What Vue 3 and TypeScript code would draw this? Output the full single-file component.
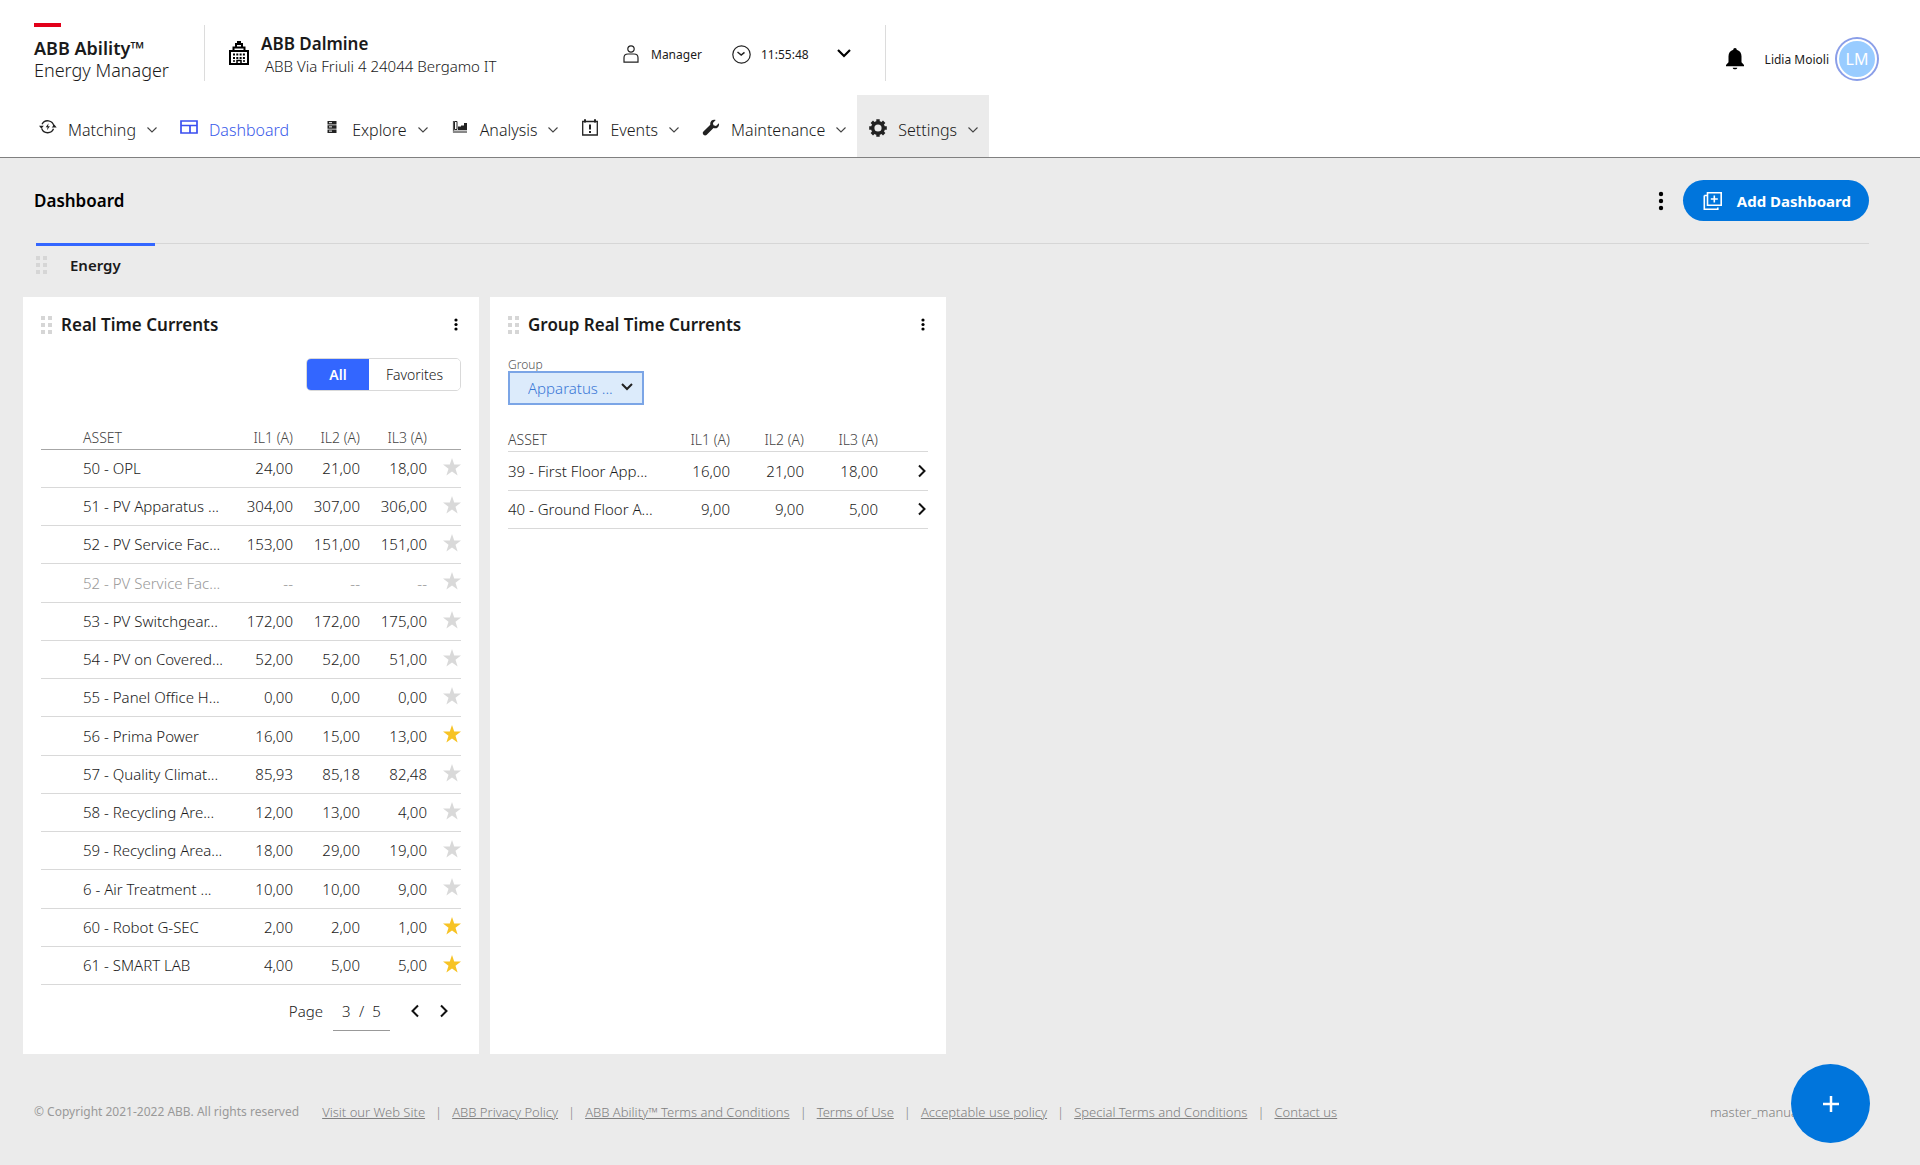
<script setup lang="ts">
import { ref } from 'vue'

interface NavItem { label: string; icon: string; menu: boolean; active?: boolean; open?: boolean }
interface Reading { asset: string; values: [string, string, string]; favorite?: boolean; offline?: boolean }

const nav: NavItem[] = [
  { label: 'Matching', menu: true, icon: '<g fill="none" stroke="#222" stroke-width="1.3"><path d="M3 5.200A6.300 6.300 0 0 1 14.800 7M14.500 9.800A6.300 6.300 0 0 1 2.700 9.500"/></g><path d="M0 6.800h4.800L2.400 9.800zM12.700 8.600h5L15.300 5.600zM9.600 4.300 6.700 8.300h1.900l-.6 3 2.900-4h-1.900z" fill="#222"/>' },
  { label: 'Dashboard', menu: false, active: true, icon: '<path d="M1 2h16v12H1zM1 6.500h16M10 6.500V14" fill="none" stroke="#3b4ff0" stroke-width="1.700"/>' },
  { label: 'Explore', menu: true, icon: '<path d="M4.500 2h9v3.500h-9zm0 4.200h9v3.500h-9zm0 4.200h9v3.500h-9z" fill="#222"/><path d="M6 3.700h3M6 7.900h3M6 12.100h3" stroke="#fff"/>' },
  { label: 'Analysis', menu: true, icon: '<path d="M2.500 2v11h13.500" fill="none" stroke="#555" stroke-width="1.200"/><path d="M3.500 2.500H6v8H3.500z" fill="none" stroke="#222"/><path d="M7 7.500h3V11H7zm3-1h3V11h-3zm3-2.500h3V11h-3z" fill="#222"/><path d="M2 11.500h14V14H2z" fill="#888"/>' },
  { label: 'Events', menu: true, icon: '<path d="M1.700 2.500h14.600v13.500H1.700z" fill="none" stroke="#222" stroke-width="1.300"/><path d="M4 .2v3.300M14 .2v3.300M9 5.500v5M9 12v2" stroke="#222" stroke-width="2" fill="none"/>' },
  { label: 'Maintenance', menu: true, icon: '<path d="M16.900 4.200 14 6.900l-2.500-.7-.6-2.300L13.700 1C10.500 0 7.700 2.300 8.300 5.700L1.200 12.800c-1.500 2 1.300 4.800 3.300 3.200L11.500 9.100c3.500.9 6.200-1.500 5.400-4.900z" fill="#222"/>' },
  { label: 'Settings', menu: true, open: true, icon: '<circle cx="9" cy="9" r="5.300" fill="none" stroke="#222" stroke-width="3.400"/><path d="M9 .2v3.500M9 14.300v3.500M.2 9h3.500M14.300 9h3.500M2.800 2.800l2.500 2.500M12.700 12.700l2.500 2.500M2.800 15.200l2.500-2.500M12.700 5.300l2.500-2.500" stroke="#222" stroke-width="3.400"/>' },
]

const readings: Reading[] = [
  { asset: '50 - OPL', values: ['24,00', '21,00', '18,00'] },
  { asset: '51 - PV Apparatus ...', values: ['304,00', '307,00', '306,00'] },
  { asset: '52 - PV Service Fac...', values: ['153,00', '151,00', '151,00'] },
  { asset: '52 - PV Service Fac...', values: ['--', '--', '--'], offline: true },
  { asset: '53 - PV Switchgear...', values: ['172,00', '172,00', '175,00'] },
  { asset: '54 - PV on Covered...', values: ['52,00', '52,00', '51,00'] },
  { asset: '55 - Panel Office H...', values: ['0,00', '0,00', '0,00'] },
  { asset: '56 - Prima Power', values: ['16,00', '15,00', '13,00'], favorite: true },
  { asset: '57 - Quality Climat...', values: ['85,93', '85,18', '82,48'] },
  { asset: '58 - Recycling Are...', values: ['12,00', '13,00', '4,00'] },
  { asset: '59 - Recycling Area...', values: ['18,00', '29,00', '19,00'] },
  { asset: '6 - Air Treatment ...', values: ['10,00', '10,00', '9,00'] },
  { asset: '60 - Robot G-SEC', values: ['2,00', '2,00', '1,00'], favorite: true },
  { asset: '61 - SMART LAB', values: ['4,00', '5,00', '5,00'], favorite: true },
]

const groups: Reading[] = [
  { asset: '39 - First Floor App...', values: ['16,00', '21,00', '18,00'] },
  { asset: '40 - Ground Floor A...', values: ['9,00', '9,00', '5,00'] },
]

const columns = ['IL1 (A)', 'IL2 (A)', 'IL3 (A)']
const links = ['Visit our Web Site', 'ABB Privacy Policy', 'ABB Ability™ Terms and Conditions', 'Terms of Use', 'Acceptable use policy', 'Special Terms and Conditions', 'Contact us']
const filter = ref<'All' | 'Favorites'>('All')
const page = ref('3')
</script>

<template>
  <div class="page">
    <header class="header">
      <div class="topbar">
        <div class="brand">
          <span class="brand-mark"></span>
          <strong>ABB Ability™</strong>
          <span>Energy Manager</span>
        </div>
        <div class="site">
          <svg class="building" width="20" height="24" viewBox="0 0 20 24" aria-hidden="true">
            <path d="M1 10h18v13H1zM4.500 9.500V6.500h11v3M7 6V3h6v3M9 3V1h2v2" fill="none" stroke="#000" stroke-width="2" />
            <path d="M4 13.500h12M4 17h12" stroke="#000" stroke-width="2" stroke-dasharray="2 1.300" />
            <path d="M4 20h2M14 20h2M8 23v-3.500h4V23" fill="none" stroke="#000" stroke-width="1.500" />
          </svg>
          <div class="site-text">
            <strong>ABB Dalmine</strong>
            <span>ABB Via Friuli 4 24044 Bergamo IT</span>
          </div>
          <div class="role">
            <svg width="16" height="18" viewBox="0 0 16 18" fill="none" stroke="#222" stroke-width="1.200" aria-hidden="true">
              <circle cx="8" cy="4" r="3.200" /><path d="M1 17.200v-4.500c0-2.500 1.500-3.700 4-3.700h6c2.500 0 4 1.200 4 3.700v4.500z" />
            </svg>
            <span>Manager</span>
          </div>
          <div class="clock">
            <svg width="19" height="19" viewBox="0 0 19 19" fill="none" stroke="#222" stroke-width="1.200" aria-hidden="true">
              <circle cx="9.500" cy="9.500" r="8.700" /><path d="M5.500 7l3.700 3 3.300-2.700" stroke-width="1.500" />
            </svg>
            <span>11:55:48</span>
          </div>
          <button class="plain" aria-label="Site details">
            <svg width="14" height="9" viewBox="0 0 14 9" fill="none" stroke="#000" stroke-width="2.200"><path d="M1 1l6 6 6-6" /></svg>
          </button>
        </div>
        <div class="user">
          <button class="plain" aria-label="Notifications">
            <svg width="18" height="22" viewBox="0 0 18 22"><path d="M9 0c1.200 0 1.700.8 1.700 1.800 3 .8 4.800 3.300 4.800 6.500v6l2.500 2.700v1.200H0V17l2.500-2.700v-6c0-3.200 1.800-5.700 4.800-6.500C7.300.8 7.800 0 9 0zM6.700 19.700h4.600c-.3 2.200-4.300 2.200-4.600 0z" /></svg>
          </button>
          <span class="user-name">Lidia Moioli</span>
          <span class="avatar">LM</span>
        </div>
      </div>
      <nav class="nav">
        <a v-for="item in nav" :key="item.label" href="#" :class="{ active: item.active, open: item.open }">
          <svg width="18" height="18" viewBox="0 0 18 18" aria-hidden="true" v-html="item.icon"></svg>
          <span>{{ item.label }}</span>
          <svg v-if="item.menu" class="caret" width="10" height="6" viewBox="0 0 10 6" fill="none" stroke="#444" stroke-width="1.100" aria-hidden="true"><path d="M.5.500 5 5 9.500.5" /></svg>
        </a>
      </nav>
    </header>

    <main class="main">
      <div class="title-row">
        <h1>Dashboard</h1>
        <button class="plain" aria-label="Dashboard options">
          <svg width="6" height="20" viewBox="0 0 6 20"><circle cx="3" cy="3" r="2.200" /><circle cx="3" cy="10" r="2.200" /><circle cx="3" cy="17" r="2.200" /></svg>
        </button>
        <button class="add">
          <svg width="20" height="20" viewBox="0 0 20 20" fill="none" stroke="#fff" stroke-width="1.600" aria-hidden="true"><path d="M4.500 1.800h13.700v12.500H4.500zM1.300 4.500v13.700h13.500v-1.800M11.300 4.500v7M7.800 8h7M4.500 4.500H1.300" /></svg>
          Add Dashboard
        </button>
      </div>
      <div class="tabs">
        <button class="tab">
          <svg width="12" height="18" viewBox="0 0 12 18" fill="#d6d6d6" aria-hidden="true"><path d="M0 0h4v4H0zM7 0h4v4H7zM0 7h4v4H0zM7 7h4v4H7zM0 14h4v4H0zM7 14h4v4H7z" /></svg>
          <span>Energy</span>
        </button>
      </div>

      <div class="cards">
        <section class="card">
          <div class="card-head">
            <svg width="12" height="18" viewBox="0 0 12 18" fill="#d6d6d6" aria-hidden="true"><path d="M0 0h4v4H0zM7 0h4v4H7zM0 7h4v4H0zM7 7h4v4H7zM0 14h4v4H0zM7 14h4v4H7z" /></svg>
            <h2>Real Time Currents</h2>
            <button class="plain" aria-label="Widget options">
              <svg width="4" height="13" viewBox="0 0 4 13"><circle cx="2" cy="2" r="1.600" /><circle cx="2" cy="6.500" r="1.600" /><circle cx="2" cy="11" r="1.600" /></svg>
            </button>
          </div>
          <div class="segment">
            <button :class="{ on: filter === 'All' }" @click="filter = 'All'">All</button>
            <button :class="{ on: filter === 'Favorites' }" @click="filter = 'Favorites'">Favorites</button>
          </div>
          <table class="readings">
            <colgroup><col class="c-pad" /><col /><col class="c-num" /><col class="c-num" /><col class="c-num" /><col class="c-star" /></colgroup>
            <thead>
              <tr><td></td><th scope="col">ASSET</th><th v-for="c in columns" :key="c" scope="col" class="num">{{ c }}</th><td></td></tr>
            </thead>
            <tbody>
              <tr v-for="(r, i) in readings" :key="i" :class="{ offline: r.offline }">
                <td></td>
                <td>{{ r.asset }}</td>
                <td v-for="(v, j) in r.values" :key="j" class="num">{{ v }}</td>
                <td class="action">
                  <button class="plain" :aria-label="'Favorite ' + r.asset" :aria-pressed="!!r.favorite">
                    <svg class="star" :class="{ gold: r.favorite }" width="18" height="18" viewBox="0 0 18 18"><path d="M9 0l2.200 6.500H18l-5.500 4.200L14.600 17.500 9 13.400l-5.600 4.100 2.100-6.800L0 6.500h6.800z" /></svg>
                  </button>
                </td>
              </tr>
            </tbody>
          </table>
          <div class="pager">
            <label for="page">Page</label>
            <span class="pager-box"><input id="page" v-model="page" type="text" /><span>/</span><span>5</span></span>
            <button class="plain" aria-label="Previous page">
              <svg width="8" height="14" viewBox="0 0 8 14" fill="none" stroke="#111" stroke-width="2"><path d="M7 1.500 1.500 7 7 12.500" /></svg>
            </button>
            <button class="plain" aria-label="Next page">
              <svg width="8" height="14" viewBox="0 0 8 14" fill="none" stroke="#111" stroke-width="2"><path d="M1 1.500 6.500 7 1 12.500" /></svg>
            </button>
          </div>
        </section>

        <section class="card">
          <div class="card-head">
            <svg width="12" height="18" viewBox="0 0 12 18" fill="#d6d6d6" aria-hidden="true"><path d="M0 0h4v4H0zM7 0h4v4H7zM0 7h4v4H0zM7 7h4v4H7zM0 14h4v4H0zM7 14h4v4H7z" /></svg>
            <h2>Group Real Time Currents</h2>
            <button class="plain" aria-label="Widget options">
              <svg width="4" height="13" viewBox="0 0 4 13"><circle cx="2" cy="2" r="1.600" /><circle cx="2" cy="6.500" r="1.600" /><circle cx="2" cy="11" r="1.600" /></svg>
            </button>
          </div>
          <div class="group-field">
            <label for="group">Group</label>
            <div class="select-wrap">
              <select id="group"><option>Apparatus ...</option></select>
              <svg width="12" height="8" viewBox="0 0 12 8" fill="none" stroke="#222" stroke-width="2" aria-hidden="true"><path d="M1 1l5 5 5-5" /></svg>
            </div>
          </div>
          <table class="groups">
            <colgroup><col /><col class="c-num" /><col class="c-num" /><col class="c-num" /><col class="c-go" /></colgroup>
            <thead>
              <tr><th scope="col">ASSET</th><th v-for="c in columns" :key="c" scope="col" class="num">{{ c }}</th><td></td></tr>
            </thead>
            <tbody>
              <tr v-for="g in groups" :key="g.asset">
                <td>{{ g.asset }}</td>
                <td v-for="(v, j) in g.values" :key="j" class="num">{{ v }}</td>
                <td class="action">
                  <button class="plain" :aria-label="'Open ' + g.asset">
                    <svg width="8" height="14" viewBox="0 0 8 14" fill="none" stroke="#111" stroke-width="2"><path d="M1 1.500 6.500 7 1 12.500" /></svg>
                  </button>
                </td>
              </tr>
            </tbody>
          </table>
        </section>
      </div>
    </main>

    <footer class="footer">
      <span class="copyright">© Copyright 2021-2022 ABB. All rights reserved</span>
      <template v-for="(link, i) in links" :key="link">
        <span v-if="i" class="bar">|</span>
        <a href="#">{{ link }}</a>
      </template>
      <span class="version">master_manual</span>
    </footer>
    <button class="fab" aria-label="Add widget">
      <svg width="18" height="18" viewBox="0 0 18 18" stroke="#fff" stroke-width="2.500"><path d="M9 1v16M1 9h16" /></svg>
    </button>
  </div>
</template>

<style>
body { background: #ebebeb; }
</style>

<style scoped>
.page { display: flex; flex-direction: column; min-height: 100vh; font-family: "Noto Sans", "Open Sans", sans-serif; font-size: 15px; font-weight: 300; color: #1a1a1a; }
svg { display: block; flex: none; }
button, input, select { font: inherit; color: inherit; }
.plain { display: block; padding: 0; border: 0; background: none; cursor: pointer; }
h1, h2 { margin: 0; font-weight: 600; }

.header { background: #fff; border-bottom: 1px solid #808080; }
.topbar { display: flex; height: 95px; padding-left: 34px; padding-right: 41px; }
.brand { display: flex; flex-direction: column; box-sizing: border-box; width: 170px; padding-top: 23px; font-size: 18px; line-height: 22px; white-space: nowrap; }
.brand strong { margin-top: 10px; font-weight: 600; }
.brand-mark { width: 27px; height: 4px; background: #e2001a; }
.site { display: flex; box-sizing: border-box; width: 682px; height: 56px; margin-top: 25px; padding-left: 24px; padding-right: 34px; border: solid #dcdcdc; border-width: 0 1px; }
.building { margin-top: 16px; }
.site-text { display: flex; flex-direction: column; width: 362px; margin-left: 12px; padding-top: 7px; line-height: 23px; white-space: nowrap; }
.site-text strong { font-size: 17px; font-weight: 600; }
.site-text span { margin-left: 4px; }
.role, .clock { display: flex; align-items: center; height: 58px; font-size: 12px; font-weight: 400; }
.role { gap: 12px; width: 109px; }
.clock { gap: 10px; flex: 1; }
.user { display: flex; align-items: center; margin-left: auto; padding-top: 22px; height: 74px; font-size: 12px; }
.user-name { margin-left: 21px; font-weight: 400; }
.avatar { display: flex; align-items: center; justify-content: center; width: 36px; height: 36px; margin-left: 8px; border: 2px solid #fff; border-radius: 50%; background: #99ccff; box-shadow: 0 0 0 2px #8a9ee8; color: #fff; font-size: 16px; font-weight: 400; margin-right: 2px; }

.nav { display: flex; padding-left: 27px; font-size: 16px; }
.nav a { display: flex; align-items: center; box-sizing: border-box; height: 62px; padding: 4px 11px 0 12px; color: inherit; text-decoration: none; }
.nav a span { margin-left: 11px; margin-top: 4px; }
.nav .caret { margin-left: 11px; margin-top: 4px; }
.nav a.active { color: #3b5bea; padding-right: 22px; }
.nav a.open { background: #ebebeb; }

.main { padding: 0 51px 0 23px; }
.title-row { display: flex; align-items: center; height: 85px; padding-left: 11px; }
.title-row h1 { margin-right: auto; font-size: 17px; color: #000; }
.add { display: flex; align-items: center; gap: 14px; height: 41px; margin-left: 19px; padding: 0 18px 0 20px; border: 0; border-radius: 21px; background: #0075dc; color: #fff; font-size: 15px; font-weight: 700; }
.tabs { margin-left: 13px; border-top: 1px solid #d6d6d6; }
.tab { display: flex; align-items: center; width: 119px; height: 40px; margin-top: -1px; padding: 0; border: 0; border-top: 3px solid #3366ff; background: none; font-size: 15px; font-weight: 600; }
.tab span { margin-left: 22px; }
.cards { display: flex; gap: 11px; margin-top: 14px; }
.card { box-sizing: border-box; width: 456px; padding: 0 18px; background: #fff; }
.card-head { display: flex; align-items: center; height: 55px; }
.card-head h2 { flex: 1; margin-left: 8px; font-size: 17px; }
.card-head .plain { margin-right: 3px; }
.segment { display: flex; width: 155px; height: 33px; margin: 6px 0 0 auto; box-sizing: border-box; border: 1px solid #d9d9d9; border-radius: 5px; overflow: hidden; }
.segment button { flex: 1; padding: 0; border: 0; background: #fff; font-size: 14px; cursor: pointer; }
.segment button:first-child { flex: none; width: 62px; }
.segment .on { background: #3366ff; color: #fff; font-weight: 600; }

table { width: 100%; table-layout: fixed; border-collapse: collapse; }
th, td { padding: 0; text-align: left; white-space: nowrap; }
th { padding-top: 2px; font-size: 14px; line-height: 18px; font-weight: 300; color: #444; }
tbody tr { height: 38px; border-bottom: 1px solid #d9d9d9; }
.num { text-align: right; }
.action .plain { margin-left: auto; }
.readings { margin-top: 34px; }
.readings thead tr { height: 24px; border-bottom: 1px solid #a6a6a6; }
.readings tbody tr:nth-child(4n) { height: 39px; }
.readings .c-pad { width: 42px; }
.readings .c-num { width: 67px; }
.readings .c-star { width: 34px; }
.offline td { color: #999; }
.star { margin-bottom: 3px; fill: #d9d9d9; }
.star.gold { fill: #f7c325; }
.pager { display: flex; align-items: center; justify-content: flex-end; margin: 7px 13px 23px 0; }
.pager-box { display: flex; align-items: center; justify-content: center; gap: 8px; width: 57px; height: 38px; margin: 0 21px 0 10px; border-bottom: 1px solid #999; }
.pager-box input { width: 9px; padding: 0; border: 0; outline: 0; background: none; font-weight: 300; }
.pager .plain + .plain { margin-left: 21px; }
.group-field { padding-top: 6px; }
.group-field label { display: block; font-size: 12px; line-height: 13px; color: #555; }
.select-wrap { position: relative; width: 136px; }
.select-wrap select { display: block; box-sizing: border-box; width: 100%; height: 34px; padding: 0 0 0 18px; border: 2px solid #7ba5e6; border-radius: 0; background: #dcebfb; color: #3a78d6; appearance: none; }
.select-wrap svg { position: absolute; right: 11px; top: 12px; pointer-events: none; }
.groups { margin-top: 22px; }
.groups thead tr { height: 24px; border-bottom: 1px solid #d9d9d9; }
.groups tbody tr:first-child { height: 39px; }
.groups .c-num { width: 74px; }
.groups .c-go { width: 50px; }
.groups .action .plain { margin-right: 2px; }

.footer { display: flex; align-items: center; height: 22px; margin: 47px 51px 41px 34px; font-size: 13px; color: #808080; white-space: nowrap; }
.copyright { margin-right: 23px; font-size: 12px; font-weight: 400; color: #999; }
.footer a { color: inherit; }
.bar { margin: 0 10px; }
.version { width: 159px; margin-left: auto; }
.fab { position: fixed; right: 50px; bottom: 22px; display: flex; align-items: center; justify-content: center; width: 79px; height: 79px; padding: 0; border: 0; border-radius: 50%; background: #0075dc; }
</style>
